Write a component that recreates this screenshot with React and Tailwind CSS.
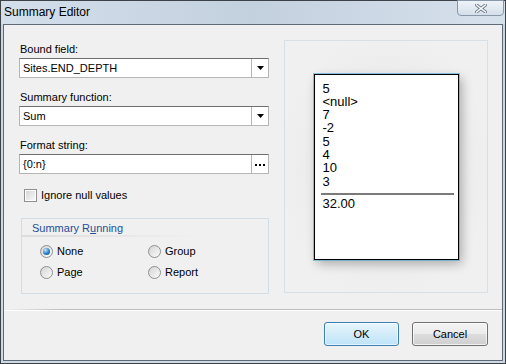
import React from 'react';

const values = ['5', '<null>', '7', '-2', '5', '4', '10', '3'];

function Field({ label, value, button }) {
  return (
    <div className="flex flex-col">
      <div className="h-[13px] leading-[13px] pl-px">{label}</div>
      <div className="mt-[2px] h-[20px] flex bg-white border border-[#b5b5b5] border-t-[#6f6f6f]">
        <div className="flex-1 pl-[3px] leading-[18px]">{value}</div>
        <div className="w-[17px] border-l border-[#b5b5b5] flex items-center justify-center">
          {button === 'arrow' ? (
            <svg width="7" height="4" viewBox="0 0 7 4">
              <polygon points="0,0 7,0 3.5,4" fill="#000" />
            </svg>
          ) : (
            <div className="flex gap-[2px] mt-[2px]">
              <span className="w-[2px] h-[2px] bg-black" />
              <span className="w-[2px] h-[2px] bg-black" />
              <span className="w-[2px] h-[2px] bg-black" />
            </div>
          )}
        </div>
      </div>
    </div>
  );
}

function Radio({ checked, label }) {
  return (
    <div className="flex items-center gap-[4px] h-[21px]">
      <span className="w-[13px] h-[13px] rounded-full border border-[#8e8f8f] bg-gradient-to-br from-[#d4d4d4] to-[#fbfbfb] flex items-center justify-center">
        {checked && (
          <span className="w-[7px] h-[7px] rounded-full bg-[radial-gradient(circle_at_35%_30%,#c4e6fb,#2b7dc4_55%,#0f4f8c)]" />
        )}
      </span>
      <span>{label}</span>
    </div>
  );
}

export default function App() {
  return (
    <div className="w-[506px] h-[364px] border border-[#3d4247] bg-gradient-to-b from-[#c8d6e4] to-[#cdd9e6] flex flex-col font-['Liberation_Sans',Arial,sans-serif] text-[11px] text-black">
      {/* Title bar */}
      <div className="h-[23px] flex items-start justify-between bg-gradient-to-r from-[#d3dfeb] via-[#c3d0de] to-[#d6e1ec]">
        <div className="pl-[3px] pt-[4px] text-[12px] leading-[14px]">Summary Editor</div>
        <div className="mr-[1px] w-[47px] h-[16px] -mt-px border border-[#8898aa] rounded-b-[4px] bg-gradient-to-b from-[#eef3f8] to-[#d5dfea] flex items-center justify-center">
          <svg width="12" height="9" viewBox="0 0 12 9">
            <path d="M1.5 1 L10.5 8 M10.5 1 L1.5 8" stroke="#6f7b88" strokeWidth="3.2" strokeLinecap="square" />
            <path d="M1.5 1 L10.5 8 M10.5 1 L1.5 8" stroke="#ffffff" strokeWidth="1.4" strokeLinecap="square" />
          </svg>
        </div>
      </div>

      {/* Client area */}
      <div className="mx-[2px] mb-[2px] flex-1 border border-[#5e6a76] bg-[#f0f0f0] flex flex-col">
        <div className="h-[284px] flex items-start">
          {/* Left column */}
          <div className="ml-[15px] w-[250px] mt-[18px] flex flex-col">
            <Field label="Bound field:" value="Sites.END_DEPTH" button="arrow" />
            <div className="mt-[13px]">
              <Field label="Summary function:" value="Sum" button="arrow" />
            </div>
            <div className="mt-[13px]">
              <Field label="Format string:" value="{0:n}" button="dots" />
            </div>

            <div className="mt-[15px] ml-[5px] flex items-center gap-[4px] h-[13px]">
              <span className="w-[13px] h-[13px] border border-[#8e8f8f] p-px bg-white">
                <span className="block w-full h-full bg-gradient-to-br from-[#d6d6d6] to-[#f8f8f8]" />
              </span>
              <span>Ignore null values</span>
            </div>

            <div className="mt-[16px] ml-[2px] h-[76px] border border-[#d3dde6] pt-[3px]">
              <div className="pl-[10px] h-[13px] leading-[13px] text-[#1f4f96]">
                Summary R<span className="underline">u</span>nning
              </div>
              <div className="w-[175px] h-[2px] bg-gradient-to-r from-[#dcdcdc] to-transparent" />
              <div className="mt-[4px] pl-[18px] grid grid-cols-[108px_1fr]">
                <Radio checked label="None" />
                <Radio label="Group" />
                <Radio label="Page" />
                <Radio label="Report" />
              </div>
            </div>
          </div>

          {/* Preview */}
          <div className="ml-[15px] mt-[15px] w-[204px] h-[253px] border border-[#d6e0e9] bg-[radial-gradient(ellipse_at_center,#e4e4e4,#f0f0f0_75%)] flex items-center justify-center">
            <div className="w-[145px] h-[186px] bg-white border border-black shadow-[0_0_0_1px_rgba(70,170,220,0.6),3px_4px_10px_rgba(0,0,0,0.28)] px-[6px] pt-[7px] text-[13px] leading-[13.3px]">
              {values.map((v, i) => (
                <div key={i} className="pl-[2px]">{v}</div>
              ))}
              <div className="mt-[5px] h-[2px] bg-[#7a7a7a] mr-[-2px]" />
              <div className="pl-[2px] mt-[2px]">32.00</div>
            </div>
          </div>
        </div>

        <div className="h-px bg-gradient-to-r from-[#f0f0f0] via-[#bdbdbd] via-[12%] to-[#bdbdbd]" />
        <div className="h-px bg-white" />

        <div className="flex justify-end gap-[13px] pr-[14px] pt-[11px]">
          <button className="w-[75px] h-[24px] rounded-[3px] border border-[#3c7fb1] bg-gradient-to-b from-[#e8f5fc] to-[#bde3f7] shadow-[inset_0_0_0_1px_rgba(255,255,255,0.6)]">
            OK
          </button>
          <button className="w-[76px] h-[24px] rounded-[3px] border border-[#707070] bg-[linear-gradient(#f3f3f3,#ebebeb_50%,#dddddd_50%,#cfcfcf)] shadow-[inset_0_0_0_1px_rgba(255,255,255,0.7)]">
            Cancel
          </button>
        </div>
      </div>
    </div>
  );
}
